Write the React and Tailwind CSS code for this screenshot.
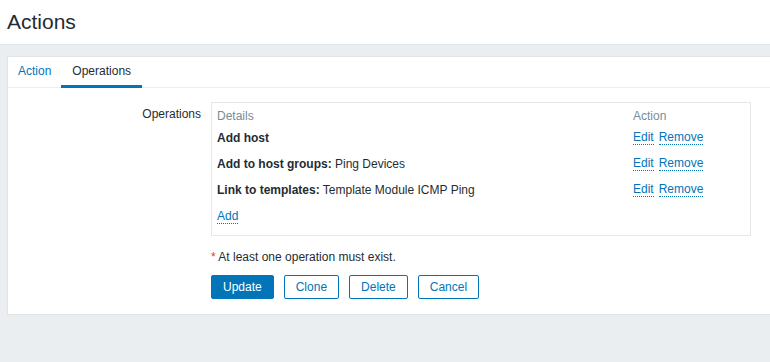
const rows = [
  { label: 'Add host', value: '' },
  { label: 'Add to host groups:', value: 'Ping Devices' },
  { label: 'Link to templates:', value: 'Template Module ICMP Ping' },
];

const DottedLink = ({ children }) => (
  <a href="#" className="text-[#0275b8] border-b border-dotted border-[#0275b8] leading-[13px] inline-block">
    {children}
  </a>
);

const Button = ({ primary, children }) => (
  <button
    className={`h-[24px] px-[11px] rounded-[2px] border text-[12px] leading-[14px] ${
      primary
        ? 'bg-[#0275b8] border-[#0275b8] text-white'
        : 'bg-white border-[#0275b8] text-[#0275b8]'
    }`}
  >
    {children}
  </button>
);

export default function App() {
  return (
    <div
      className="w-full min-h-[362px] bg-[#ebeef0] overflow-hidden text-[12px] leading-[14px] text-[#1f2c33]"
      style={{ fontFamily: '"Liberation Sans", Arial, sans-serif' }}
    >
      <header className="bg-white border-b border-[#dfe4e7] pt-[10px] pb-[10px] pl-[7px]">
        <h1 className="text-[21px] leading-[24px] font-normal">Actions</h1>
      </header>

      <div className="mt-[11px] ml-[7px] w-[800px] bg-white border border-[#dfe4e7]">
        {/* tabs */}
        <div className="flex border-b border-[#ebeef0]">
          <a href="#" className="px-[10px] pt-[7px] pb-[7px] border-b-[3px] border-transparent text-[#0275b8] mb-[-1px]">
            Action
          </a>
          <span className="px-[11px] pt-[7px] pb-[7px] border-b-[3px] border-[#0275b8] mb-[-1px]">
            Operations
          </span>
        </div>

        {/* form */}
        <div className="pt-[14px] pb-[15px]">
          <div className="flex gap-[10px]">
            <div className="w-[193px] text-right pt-[5px]">Operations</div>
            <div className="w-[540px] border border-[#e4e8ea] pb-[5px]">
              <div className="flex text-[#768d99] pt-[6px] pb-[2px]">
                <div className="w-[416px] pl-[5px]">Details</div>
                <div className="pl-[5px]">Action</div>
              </div>
              {rows.map((r) => (
                <div key={r.label} className="flex py-[6px]">
                  <div className="w-[416px] pl-[5px]">
                    <span className="font-bold">{r.label}</span>
                    {r.value && <span> {r.value}</span>}
                  </div>
                  <div className="pl-[5px] flex gap-[5px]">
                    <DottedLink>Edit</DottedLink>
                    <DottedLink>Remove</DottedLink>
                  </div>
                </div>
              ))}
              <div className="py-[6px] pl-[5px]">
                <DottedLink>Add</DottedLink>
              </div>
            </div>
          </div>

          <div className="ml-[203px] mt-[14px]">
            <span className="text-[#e33734]">*</span> At least one operation must exist.
          </div>

          <div className="ml-[203px] mt-[11px] flex gap-[10px]">
            <Button primary>Update</Button>
            <Button>Clone</Button>
            <Button>Delete</Button>
            <Button>Cancel</Button>
          </div>
        </div>
      </div>
    </div>
  );
}
